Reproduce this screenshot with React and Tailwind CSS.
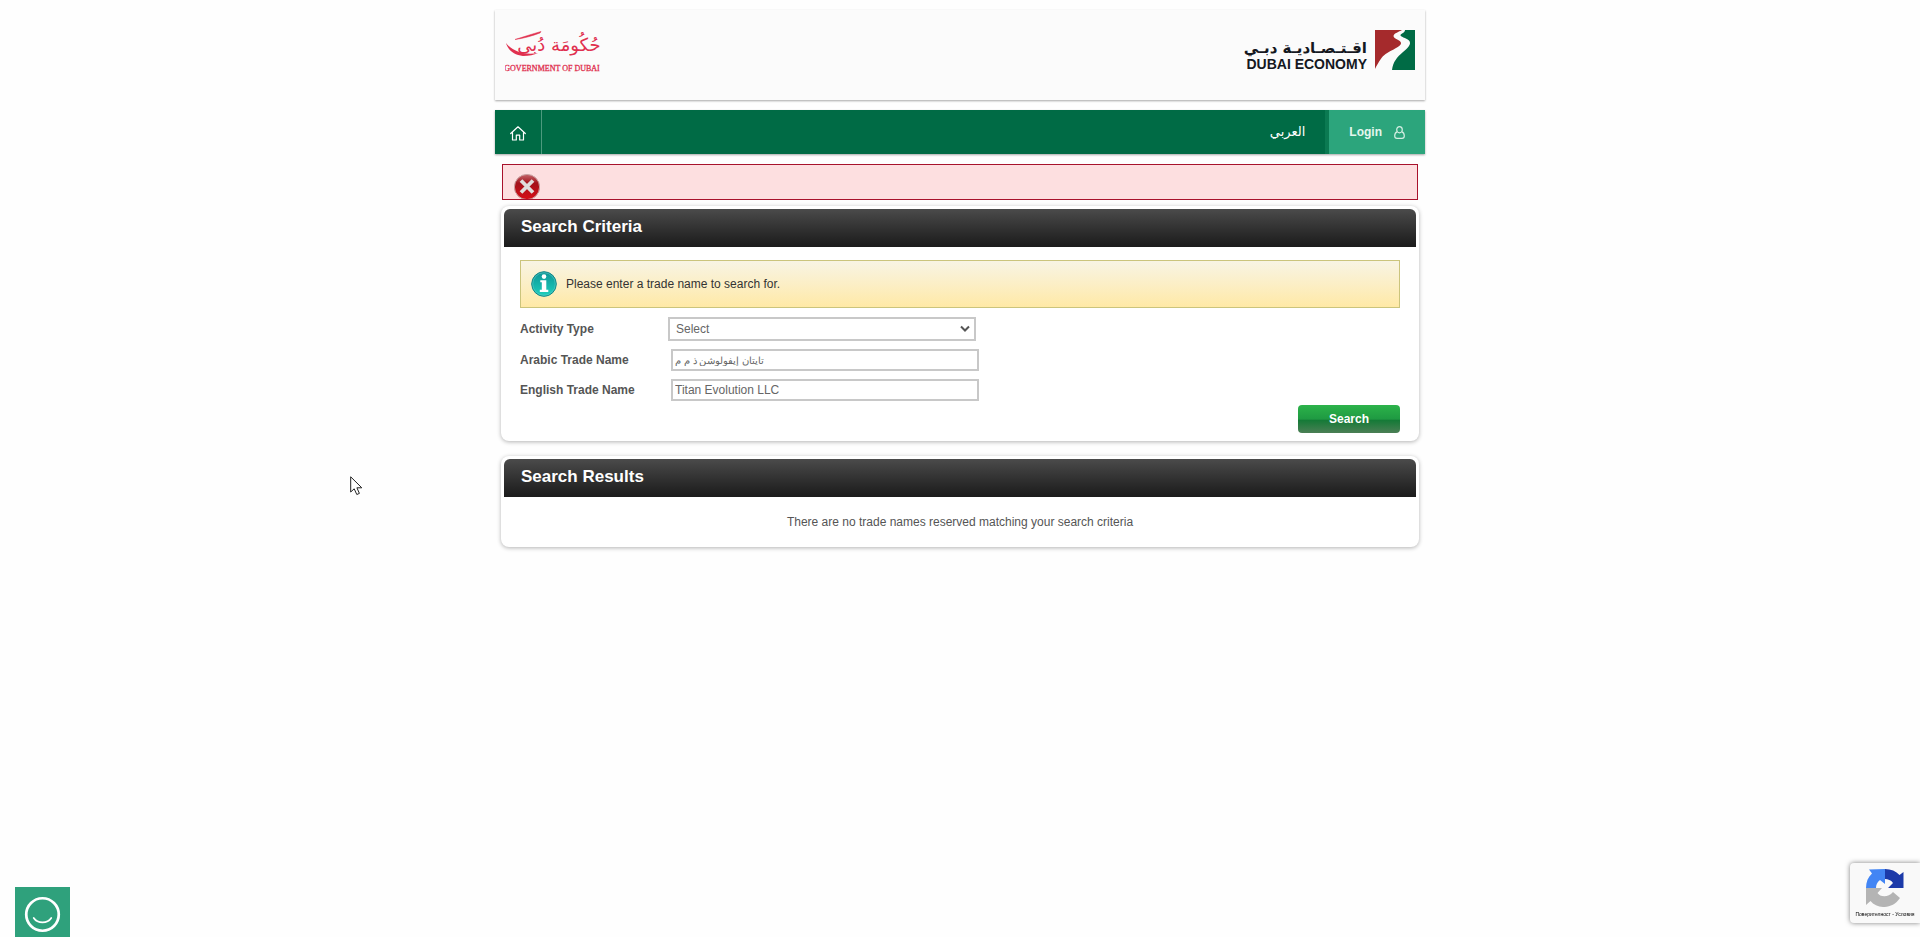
import { useState } from 'react'

function GovernmentLogo() {
  return (
    <svg width="96" height="44" viewBox="0 0 96 44" role="img" aria-label="Government of Dubai">
      <text x="54" y="21" textAnchor="middle" className="fill-[#e0304f] font-['DejaVu_Sans',sans-serif] text-[18px]">حُكُومَة دُبي</text>
      <path d="M1 13C3 20 9 25 18 26C24 26 29 25 33 23C27 24 20 24 14 22C8 20 4 17 1 13Z" fill="#e0304f" />
      <path d="M10 9.500C18 7 27 4 36 1.500L35 3C27 6 18 8.500 10 9.500Z" fill="#e0304f" stroke="#e0304f" strokeWidth=".5" />
      <text x="47" y="41" textAnchor="middle" className="fill-[#e0304f] stroke-[#e0304f] stroke-[0.3px] font-['Liberation_Serif',serif] text-[8px]">GOVERNMENT OF DUBAI</text>
    </svg>
  )
}

function EconomyLogo() {
  return (
    <div className="flex gap-2">
      <div className="flex flex-col items-end pt-2 text-[#15181f]">
        <span dir="rtl" className="font-['DejaVu_Sans',sans-serif] text-[15px] font-bold leading-5">اقـتـصـاديـة دبـي</span>
        <span className="font-['Liberation_Sans',Arial,sans-serif] text-sm font-bold leading-3">DUBAI ECONOMY</span>
      </div>
      <svg width="40" height="40" viewBox="0 0 40 40" aria-hidden="true">
        <path d="M0 0H27C24 2 19 3 18.500 6C18.500 9 26 10 26 13C26 18 13 20 6.500 28C3.500 32 1.500 36 0 39Z" fill="#a52a2c" />
        <path d="M30 0H40V40H17C18 32 22 27 28 22C33 18 37 14 34 10.500C31 7.500 25 7 25.500 5C26 3.500 30 3 30 0Z" fill="#006b45" />
      </svg>
    </div>
  )
}

function HomeIcon() {
  return (
    <svg width="16" height="15" viewBox="0 0 16 15" fill="none" stroke="white" strokeWidth="1.2" strokeLinejoin="round" strokeLinecap="round">
      <path d="M.7 7.5L8 .8L15.3 7.5M2.5 6.5V14H6.3V9.2H9.7V14H13.5V6.5" />
    </svg>
  )
}

function UserIcon() {
  return (
    <svg width="11" height="13" viewBox="0 0 11 13" fill="none" stroke="#d3eee2" strokeWidth="1.2">
      <ellipse cx="5.5" cy="3.7" rx="2.8" ry="3.1" />
      <path d="M3.2 5.8C1.4 6.3.7 7.8.7 10C.7 11.7 1.5 12.3 3 12.3H8C9.5 12.3 10.3 11.7 10.3 10C10.3 7.8 9.6 6.3 7.8 5.8" />
    </svg>
  )
}

function ErrorIcon() {
  return (
    <svg width="28" height="26" viewBox="0 0 28 26" aria-hidden="true">
      <defs>
        <linearGradient id="error-fill" x1="0" y1="0" x2="0" y2="1">
          <stop offset="0" stopColor="#c4666b" />
          <stop offset="0.35" stopColor="#a3121b" />
          <stop offset="1" stopColor="#d80d17" />
        </linearGradient>
      </defs>
      <circle cx="14" cy="14" r="12.6" fill="url(#error-fill)" stroke="#c9a0a0" strokeWidth="1" />
      <path d="M8 7.5L20 19.5M20 7.500L8 19.500" stroke="#e0dede" strokeWidth="3.800" />
    </svg>
  )
}

function InfoIcon() {
  return (
    <svg width="26" height="26" viewBox="0 0 26 26" aria-hidden="true">
      <defs>
        <linearGradient id="info-fill" x1="0" y1="0" x2="0" y2="1">
          <stop offset="0" stopColor="#0c9496" />
          <stop offset="1" stopColor="#1fd0bd" />
        </linearGradient>
      </defs>
      <circle cx="13" cy="13" r="12.3" fill="url(#info-fill)" stroke="#128487" strokeWidth="1" />
      <circle cx="13" cy="13" r="11.3" fill="none" stroke="#5ccac5" strokeWidth=".6" />
      <circle cx="13" cy="5.6" r="2.3" fill="white" />
      <path d="M9.300 9.300H15.300V18.800H17.300V21H8.800V18.800H10.800V11.300H9.300Z" fill="white" />
    </svg>
  )
}

function Panel({ title, children }) {
  return (
    <section className="mx-1.5 rounded-lg bg-white p-[3px] shadow-[0_1px_4px_rgba(0,0,0,0.3)]">
      <h2 className="h-[38px] rounded-t-md bg-linear-to-b from-[#4b4b4b] to-[#1b1b1b] px-[17px] text-[17px] font-bold leading-9 text-white">{title}</h2>
      {children}
    </section>
  )
}

function TextField({ id, label, value, onChange, textSize = 'text-xs' }) {
  return (
    <div className="flex items-center">
      <label htmlFor={id} className="w-[151px] font-bold">{label}</label>
      <input
        id={id}
        type="text"
        value={value}
        onChange={(e) => onChange(e.target.value)}
        className={`h-[22px] w-[308px] border-2 border-[#c8c8c8] bg-white px-0.5 text-[#666] outline-none ${textSize}`}
      />
    </div>
  )
}

export default function App() {
  const [activity, setActivity] = useState('')
  const [arabicName, setArabicName] = useState('تايتان إيفولوشن ذ م م')
  const [englishName, setEnglishName] = useState('Titan Evolution LLC')

  return (
    <div className="min-h-screen bg-[#fefefe] font-['Liberation_Sans',Arial,sans-serif] text-xs text-[#555]">
      <div className="mx-auto w-full max-w-[930px] pt-[10px]">
        <header className="flex h-[90px] items-start justify-between bg-[#fbfbfb] px-[10px] pt-5 shadow-[0_1px_2px_rgba(0,0,0,0.35)]">
          <GovernmentLogo />
          <EconomyLogo />
        </header>

        <nav className="mt-[10px] flex h-11 justify-between bg-[#006b45] text-white shadow-[0_1px_2px_rgba(0,0,0,0.35)]">
          <a href="#home" aria-label="Home" className="flex w-[47px] items-center justify-center border-r border-[#4d9a7e] pt-0.5">
            <HomeIcon />
          </a>
          <div className="flex">
            <a href="#arabic" lang="ar" className="flex items-center px-5 font-['DejaVu_Sans',sans-serif] text-[13px]">العربي</a>
            <a href="#login" className="flex items-center gap-3 border-l-4 border-[#0b7a52] bg-[#2ca57c] px-5 font-bold text-[#e4f6ee]">
              Login
              <UserIcon />
            </a>
          </div>
        </nav>

        <div role="alert" className="mx-[7px] mt-[10px] mb-1.5 h-9 overflow-hidden border border-[#a8122c] bg-[#fddfe0] pl-[10px] pt-2">
          <ErrorIcon />
        </div>

        <Panel title="Search Criteria">
          <form className="px-4 pt-[13px] pb-[5px]" onSubmit={(e) => e.preventDefault()}>
            <div className="flex h-12 items-center gap-[9px] border border-[#cbc47c] bg-linear-to-b from-[#f8f4e4] to-[#ffe9a6] px-[10px] text-[#333]">
              <InfoIcon />
              <p>Please enter a trade name to search for.</p>
            </div>
            <div className="mt-[9px] flex flex-col gap-2">
              <div className="flex items-center">
                <label htmlFor="activity" className="w-[148px] font-bold">Activity Type</label>
                <div className="relative w-[308px]">
                  <select
                    id="activity"
                    value={activity}
                    onChange={(e) => setActivity(e.target.value)}
                    className="block h-6 w-full appearance-none border-2 border-[#c8c8c8] bg-white px-1.5 text-[#666] outline-none"
                  >
                    <option value="">Select</option>
                  </select>
                  <svg className="pointer-events-none absolute right-1.5 top-2" width="10" height="8" viewBox="0 0 10 8" fill="none" stroke="#555" strokeWidth="2">
                    <path d="M1 1.5L5 5.5L9 1.5" />
                  </svg>
                </div>
              </div>
              <TextField id="arabic-name" label="Arabic Trade Name" value={arabicName} onChange={setArabicName} textSize="text-[10px]" />
              <TextField id="english-name" label="English Trade Name" value={englishName} onChange={setEnglishName} />
            </div>
            <div className="mt-1 flex justify-end">
              <button type="submit" className="h-7 w-[102px] rounded bg-[linear-gradient(#2cb34a,#1f9a42_50%,#157a37_55%,#4b7f55)] font-bold text-white">Search</button>
            </div>
          </form>
        </Panel>

        <div className="mt-[15px]">
          <Panel title="Search Results">
            <p className="pt-[17px] pb-[14px] text-center leading-4">There are no trade names reserved matching your search criteria</p>
          </Panel>
        </div>
      </div>

      <svg className="pointer-events-none fixed left-[350px] top-[476px]" width="13" height="20" viewBox="0 0 13 20" aria-hidden="true">
        <path d="M.7 .8V16L4.2 12.8L6.8 18.5L9.4 17.4L6.9 11.8H11.8Z" fill="white" stroke="#222" strokeWidth="1" />
      </svg>

      <button type="button" aria-label="Happiness meter" className="fixed bottom-0 left-[15px] flex h-[50px] w-[55px] items-end justify-center bg-[#2fa17c] pb-1">
        <svg width="37" height="37" viewBox="0 0 38 38" fill="none" stroke="white" strokeLinecap="round">
          <circle cx="19" cy="19" r="16.7" strokeWidth="2.8" />
          <path d="M10 22.5C14 28.5 24 28.5 28 22.5" strokeWidth="1.8" />
        </svg>
      </button>

      <div className="fixed bottom-[14px] right-0 flex h-[60px] w-[70px] flex-col items-center overflow-hidden rounded-l-sm bg-[#f9f9f9] pt-1.5 shadow-[0_0_5px_rgba(0,0,0,0.5)]">
        <svg width="38" height="38" viewBox="0 0 38 38" aria-hidden="true">
          <path d="M19 0C25 0 30 2 33.500 6L37.500 3V19H22L27 14C25 11 22 10 19 10Z" fill="#1c3aa9" />
          <path d="M19 0V15L14 11C11 13 10 16 10 19H0C0 13 2 8 6 4.500L3 .5Z" fill="#4285f4" />
          <path d="M0 19H16L11.500 24C14 28 22 29 27 23L34 29C26 41 11 40 4.500 32L0 36Z" fill="#b4b4b4" />
        </svg>
        <span className="mt-1 whitespace-nowrap text-[5px] leading-[6px] text-black">Поверителност - Условия</span>
      </div>
    </div>
  )
}
